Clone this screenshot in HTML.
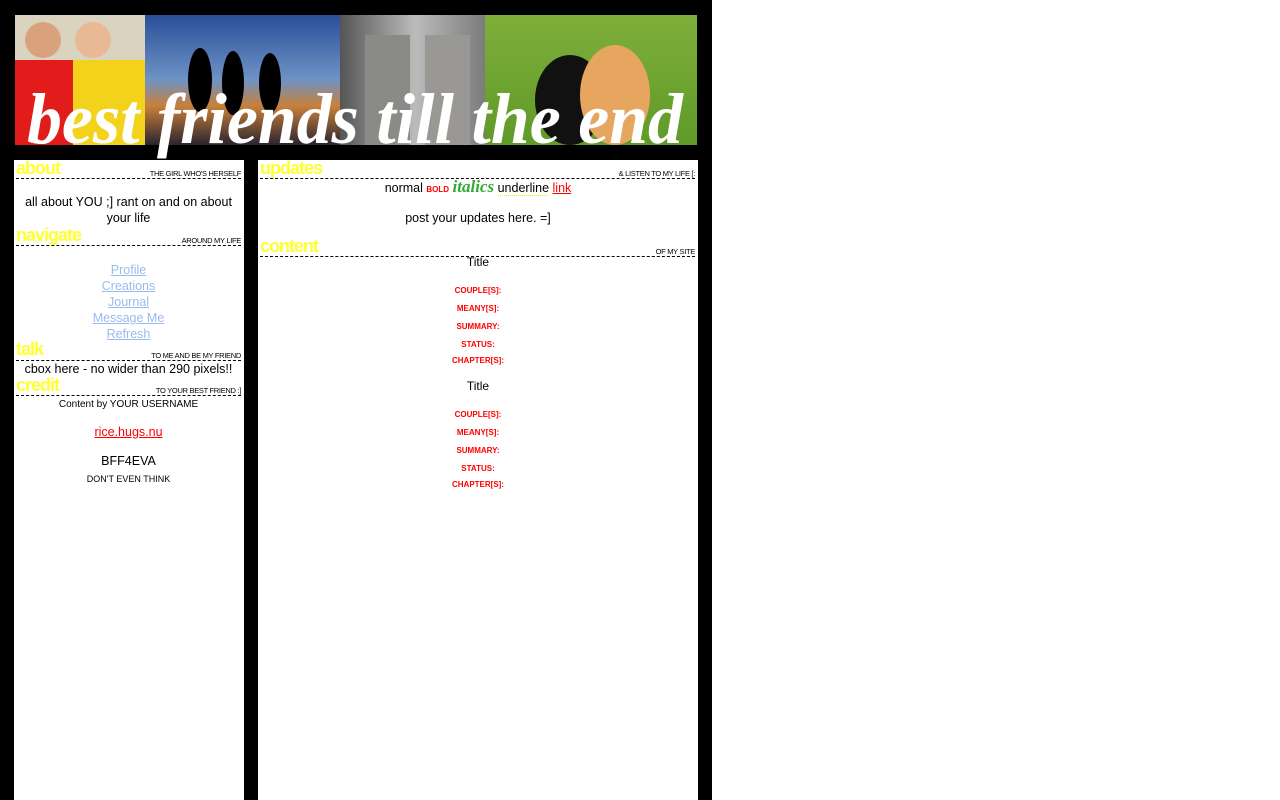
<!DOCTYPE html>
<html><head><meta charset="utf-8">
<style>
*{margin:0;padding:0;box-sizing:border-box}
html,body{width:1280px;height:800px;background:#fff;overflow:hidden;font-family:"Liberation Sans","DejaVu Sans",sans-serif;color:#000}
#bg{position:absolute;left:0;top:0;width:712px;height:800px;background:#000}
.col{position:absolute;top:160px;height:640px;background:#fff}
.a{position:absolute}
.h{position:absolute;color:#ffff33;font-weight:bold;font-size:18px;letter-spacing:-1px;line-height:17px;font-family:"Liberation Sans",sans-serif}
.sub{position:absolute;font-size:7.5px;text-align:right;text-transform:uppercase;letter-spacing:-0.3px;line-height:8px}
.dash{position:absolute;border-top:1px dashed #000;height:0}
.c{position:absolute;text-align:center;font-size:12.5px;line-height:16px}
.nav a{color:#99bbee;text-decoration:underline;display:block}
.lab{position:absolute;width:440px;left:258px;text-align:center;color:#ff0000;font-weight:bold;font-size:8px}
.t{position:absolute;width:440px;left:258px;text-align:center;font-size:12px}
</style></head><body>
<div id="bg"></div>
<svg class="a" style="left:15px;top:15px" width="682" height="150" viewBox="0 0 682 150">
<defs>
<linearGradient id="sky" x1="0" y1="0" x2="0" y2="1"><stop offset="0" stop-color="#2a4f9a"/><stop offset="0.5" stop-color="#6f93c4"/><stop offset="0.7" stop-color="#c8803a"/><stop offset="1" stop-color="#2a2430"/></linearGradient>
<linearGradient id="bw" x1="0" y1="0" x2="1" y2="0"><stop offset="0" stop-color="#555"/><stop offset="0.5" stop-color="#bbb"/><stop offset="1" stop-color="#777"/></linearGradient>
<linearGradient id="gr" x1="0" y1="0" x2="0" y2="1"><stop offset="0" stop-color="#7fae3a"/><stop offset="1" stop-color="#5f9a28"/></linearGradient>
</defs>
<rect x="0" y="0" width="130" height="130" fill="#d9d3c0"/>
<rect x="0" y="45" width="60" height="85" fill="#e21b1b"/>
<rect x="58" y="45" width="72" height="85" fill="#f2d21a"/>
<circle cx="28" cy="25" r="18" fill="#d9a27c"/><circle cx="78" cy="25" r="18" fill="#e8b994"/>
<rect x="130" y="0" width="200" height="130" fill="url(#sky)"/>
<g fill="#000"><ellipse cx="185" cy="65" rx="12" ry="32"/><ellipse cx="218" cy="68" rx="11" ry="32"/><ellipse cx="255" cy="68" rx="11" ry="30"/></g>
<rect x="325" y="0" width="150" height="130" fill="url(#bw)"/>
<rect x="350" y="20" width="45" height="110" fill="#8a8a86"/><rect x="410" y="20" width="45" height="110" fill="#9a9894"/>
<rect x="470" y="0" width="212" height="130" fill="url(#gr)"/>
<ellipse cx="555" cy="85" rx="35" ry="45" fill="#111"/><ellipse cx="600" cy="80" rx="35" ry="50" fill="#e6a660"/>
<text x="12" y="128" fill="#fff" font-family="Liberation Serif,serif" font-style="italic" font-weight="bold" font-size="72" textLength="656" lengthAdjust="spacingAndGlyphs">best friends till the end</text>
</svg>

<div class="col" style="left:14px;width:230px"></div>
<div class="col" style="left:258px;width:440px"></div>

<div class="h" style="left:16px;top:160px">about</div>
<div class="sub" style="left:16px;width:225px;top:170px">the girl who's herself</div>
<div class="dash" style="left:16px;width:225px;top:178px"></div>
<div class="c" style="left:16px;width:225px;top:194px">all about YOU ;] rant on and on about your life</div>

<div class="h" style="left:16px;top:227px">navigate</div>
<div class="sub" style="left:16px;width:225px;top:237px">around my life</div>
<div class="dash" style="left:16px;width:225px;top:245px"></div>
<div class="c nav" style="left:16px;width:225px;top:262px"><a>Profile</a><a>Creations</a><a>Journal</a><a>Message Me</a><a>Refresh</a></div>

<div class="h" style="left:16px;top:341px">talk</div>
<div class="sub" style="left:16px;width:225px;top:352px">to me and be my friend</div>
<div class="dash" style="left:16px;width:225px;top:360px"></div>
<div class="c" style="left:16px;width:225px;top:361px">cbox here - no wider than 290 pixels!!</div>

<div class="h" style="left:16px;top:377px">credit</div>
<div class="sub" style="left:16px;width:225px;top:387px">to your best friend :]</div>
<div class="dash" style="left:16px;width:225px;top:395px"></div>
<div class="c" style="left:16px;width:225px;top:397px;font-size:10px">Content by YOUR USERNAME</div>
<div class="c" style="left:16px;width:225px;top:424px"><span style="color:#ff0000;text-decoration:underline">rice.hugs.nu</span></div>
<div class="c" style="left:16px;width:225px;top:453px">BFF4EVA</div>
<div class="c" style="left:16px;width:225px;top:471px;font-size:9px">DON'T EVEN THINK</div>

<div class="h" style="left:260px;top:160px">updates</div>
<div class="sub" style="left:260px;width:435px;top:170px">&amp; listen to my life [:</div>
<div class="dash" style="left:260px;width:435px;top:178px"></div>
<div class="c" style="left:258px;width:440px;top:179px">normal <b style="color:#ff0000;font-size:8px;text-transform:uppercase">bold</b> <i style="color:#33aa33;font-family:'Liberation Serif',serif;font-weight:bold;font-size:17px">italics</i> <span style="border-bottom:1px dotted #ee0">underline</span> <span style="color:#ff0000;text-decoration:underline">link</span></div>
<div class="c" style="left:258px;width:440px;top:210px">post your updates here. =]</div>

<div class="h" style="left:260px;top:238px">content</div>
<div class="sub" style="left:260px;width:435px;top:248px">of my site</div>
<div class="dash" style="left:260px;width:435px;top:256px"></div>
<div class="t" style="top:255px">Title</div>
<div class="lab" style="top:286px">COUPLE[S]:</div>
<div class="lab" style="top:304px">MEANY[S]:</div>
<div class="lab" style="top:322px">SUMMARY:</div>
<div class="lab" style="top:340px">STATUS:</div>
<div class="lab" style="top:356px">CHAPTER[S]:</div>
<div class="t" style="top:379px">Title</div>
<div class="lab" style="top:410px">COUPLE[S]:</div>
<div class="lab" style="top:428px">MEANY[S]:</div>
<div class="lab" style="top:446px">SUMMARY:</div>
<div class="lab" style="top:464px">STATUS:</div>
<div class="lab" style="top:480px">CHAPTER[S]:</div>
</body></html>
